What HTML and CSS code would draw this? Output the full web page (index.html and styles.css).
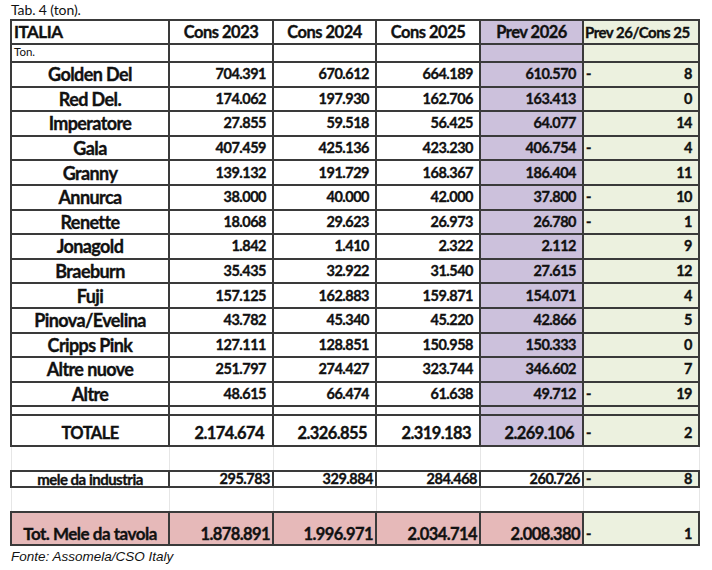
FILE: index.html
```html
<!DOCTYPE html>
<html lang="it">
<head>
<meta charset="utf-8">
<title>Tab. 4 (ton).</title>
<link rel="stylesheet" href="styles.css">
</head>
<body>
<div class="page">
  <div class="caption">Tab. 4 (ton).</div>
  <table class="grid">
    <colgroup>
      <col class="c1"><col class="c2"><col class="c3"><col class="c4"><col class="c5"><col class="c6">
    </colgroup>
    <tr class="head">
      <td class="italia">ITALIA</td>
      <td class="h">Cons 2023</td>
      <td class="h">Cons 2024</td>
      <td class="h">Cons 2025</td>
      <td class="h prev">Prev 2026</td>
      <td class="h var small">Prev 26/Cons 25</td>
    </tr>
    <tr class="unit">
      <td class="ton">Ton.</td><td></td><td></td><td></td><td class="prev"></td><td class="var"></td>
    </tr>
    <tr class="data"><td class="name">Golden Del</td><td class="n">704.391</td><td class="n">670.612</td><td class="n">664.189</td><td class="n prev">610.570</td><td class="var"><div class="vc"><span>-</span><span>8</span></div></td></tr>
    <tr class="data"><td class="name">Red Del.</td><td class="n">174.062</td><td class="n">197.930</td><td class="n">162.706</td><td class="n prev">163.413</td><td class="var"><div class="vc"><span></span><span>0</span></div></td></tr>
    <tr class="data"><td class="name">Imperatore</td><td class="n">27.855</td><td class="n">59.518</td><td class="n">56.425</td><td class="n prev">64.077</td><td class="var"><div class="vc"><span></span><span>14</span></div></td></tr>
    <tr class="data"><td class="name">Gala</td><td class="n">407.459</td><td class="n">425.136</td><td class="n">423.230</td><td class="n prev">406.754</td><td class="var"><div class="vc"><span>-</span><span>4</span></div></td></tr>
    <tr class="data"><td class="name">Granny</td><td class="n">139.132</td><td class="n">191.729</td><td class="n">168.367</td><td class="n prev">186.404</td><td class="var"><div class="vc"><span></span><span>11</span></div></td></tr>
    <tr class="data"><td class="name">Annurca</td><td class="n">38.000</td><td class="n">40.000</td><td class="n">42.000</td><td class="n prev">37.800</td><td class="var"><div class="vc"><span>-</span><span>10</span></div></td></tr>
    <tr class="data"><td class="name">Renette</td><td class="n">18.068</td><td class="n">29.623</td><td class="n">26.973</td><td class="n prev">26.780</td><td class="var"><div class="vc"><span>-</span><span>1</span></div></td></tr>
    <tr class="data"><td class="name">Jonagold</td><td class="n">1.842</td><td class="n">1.410</td><td class="n">2.322</td><td class="n prev">2.112</td><td class="var"><div class="vc"><span></span><span>9</span></div></td></tr>
    <tr class="data"><td class="name">Braeburn</td><td class="n">35.435</td><td class="n">32.922</td><td class="n">31.540</td><td class="n prev">27.615</td><td class="var"><div class="vc"><span></span><span>12</span></div></td></tr>
    <tr class="data"><td class="name">Fuji</td><td class="n">157.125</td><td class="n">162.883</td><td class="n">159.871</td><td class="n prev">154.071</td><td class="var"><div class="vc"><span></span><span>4</span></div></td></tr>
    <tr class="data"><td class="name">Pinova/Evelina</td><td class="n">43.782</td><td class="n">45.340</td><td class="n">45.220</td><td class="n prev">42.866</td><td class="var"><div class="vc"><span></span><span>5</span></div></td></tr>
    <tr class="data"><td class="name">Cripps Pink</td><td class="n">127.111</td><td class="n">128.851</td><td class="n">150.958</td><td class="n prev">150.333</td><td class="var"><div class="vc"><span></span><span>0</span></div></td></tr>
    <tr class="data"><td class="name">Altre nuove</td><td class="n">251.797</td><td class="n">274.427</td><td class="n">323.744</td><td class="n prev">346.602</td><td class="var"><div class="vc"><span></span><span>7</span></div></td></tr>
    <tr class="data"><td class="name">Altre</td><td class="n">48.615</td><td class="n">66.474</td><td class="n">61.638</td><td class="n prev">49.712</td><td class="var"><div class="vc"><span>-</span><span>19</span></div></td></tr>
    <tr class="gap"><td></td><td></td><td></td><td></td><td class="prev"></td><td class="var"></td></tr>
    <tr class="total"><td class="name">TOTALE</td><td class="n">2.174.674</td><td class="n">2.326.855</td><td class="n">2.319.183</td><td class="n prev">2.269.106</td><td class="var"><div class="vc"><span>-</span><span>2</span></div></td></tr>
    <tr class="blank"><td></td><td></td><td></td><td></td><td></td><td></td></tr>
    <tr class="ind"><td class="name">mele da industria</td><td class="n">295.783</td><td class="n">329.884</td><td class="n">284.468</td><td class="n">260.726</td><td class="var"><div class="vc"><span>-</span><span>8</span></div></td></tr>
    <tr class="blank"><td></td><td></td><td></td><td></td><td></td><td></td></tr>
    <tr class="tavola"><td class="name">Tot. Mele da tavola</td><td class="n">1.878.891</td><td class="n">1.996.971</td><td class="n">2.034.714</td><td class="n">2.008.380</td><td class="var"><div class="vc"><span>-</span><span>1</span></div></td></tr>
  </table>
  <div class="source">Fonte: Assomela/CSO Italy</div>
</div>
</body>
</html>
```

FILE: styles.css
```css
html, body {
  margin: 0;
  padding: 0;
  background: #ffffff;
}

.page {
  padding: 2px 0 0 10px;
  font-family: Lato, "Noto Sans", sans-serif;
  color: #111111;
}

.caption {
  font-size: 14px;
  line-height: 16px;
  height: 17px;
  padding-left: 1px;
  letter-spacing: -0.1px;
}

.grid {
  border-collapse: collapse;
  table-layout: fixed;
  width: 688px;
}

.c1 { width: 158px; }
.c2 { width: 104px; }
.c3 { width: 103px; }
.c4 { width: 104px; }
.c5 { width: 103px; }
.c6 { width: 116px; }

.grid td {
  border: 2px solid #3a3a3a;
  padding: 0;
  font-weight: 700;
  line-height: 18px;
  white-space: nowrap;
  overflow: hidden;
  -webkit-text-stroke: 0.35px #111111;
}

.prev { background: #ccc1dc; }
.var { background: #ecf1df; }

.head td {
  height: 22px;
  font-size: 16.5px;
  letter-spacing: -0.5px;
  text-align: center;
}

.head .italia {
  text-align: left;
  padding-left: 2px;
  font-size: 17px;
}

.head .small {
  font-size: 15px;
  text-align: left;
  padding-left: 1px;
}

.unit td {
  height: 16px;
  line-height: 14px;
}

.unit .ton {
  font-weight: 400;
  -webkit-text-stroke: 0;
  font-size: 11.5px;
  vertical-align: top;
  padding-left: 2px;
}

.data td {
  height: 22.6px;
  font-size: 14.5px;
  letter-spacing: -0.5px;
}

.name {
  text-align: center;
}

.data .name {
  font-size: 18px;
  letter-spacing: -0.6px;
}

.n {
  text-align: right;
}

.data .n {
  padding-right: 6px;
}

.vc {
  display: flex;
  justify-content: space-between;
  padding: 0 6px 0 2px;
  font-size: 14.5px;
  letter-spacing: -0.5px;
}

.gap td {
  height: 7px;
  line-height: 4px;
}

.total td {
  height: 27px;
  font-size: 16.5px;
  letter-spacing: -0.6px;
  vertical-align: bottom;
  padding-bottom: 2px;
  line-height: 20px;
}

.total .n {
  padding-right: 8px;
}

.blank td {
  height: 23px;
  line-height: 16px;
  border-top: none;
  border-bottom: none;
  border-left: 1px solid #e6e6e6;
  border-right: 1px solid #e6e6e6;
  background: #ffffff;
}

.ind td {
  height: 14px;
  line-height: 14px;
  font-size: 14.5px;
  letter-spacing: -0.5px;
}

.ind .name {
  font-size: 15px;
}

.ind .n {
  padding-right: 2px;
}

.tavola td {
  height: 31px;
  font-size: 16.5px;
  letter-spacing: -0.6px;
  vertical-align: bottom;
  background: #e6b9b9;
  line-height: 20px;
}

.tavola td.var {
  background: #ecf1df;
}

.tavola .name {
  font-size: 17px;
  letter-spacing: -0.5px;
}

.tavola .n {
  padding-right: 2px;
}

.source {
  font-family: "Liberation Sans", Arial, sans-serif;
  font-style: italic;
  font-size: 13.5px;
  line-height: 16px;
  padding: 3px 0 0 1px;
}
```
